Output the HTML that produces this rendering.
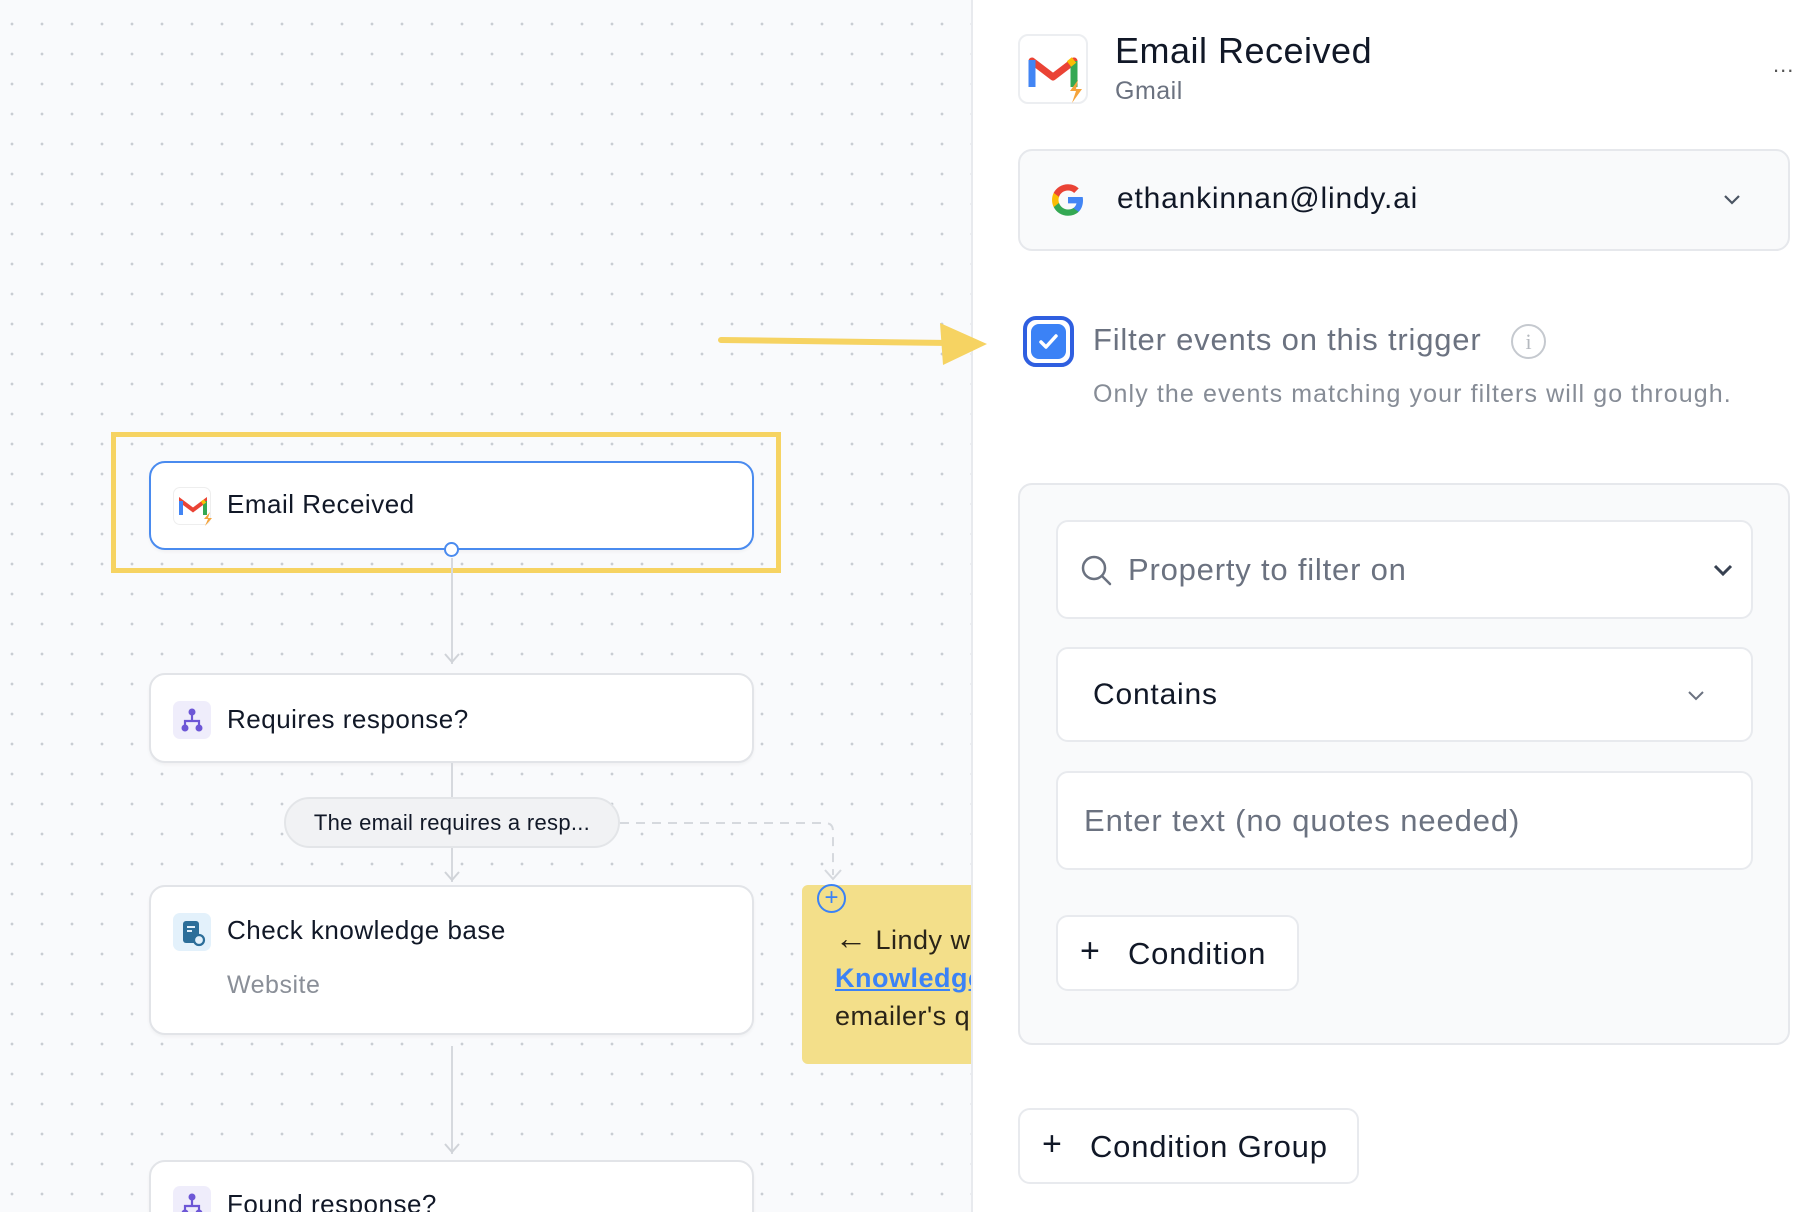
<!DOCTYPE html>
<html style="overflow:hidden;width:1802px;height:1212px"><head><meta charset="utf-8"><style>
*{box-sizing:border-box;margin:0;padding:0}
body{width:1802px;height:1212px;overflow:hidden;position:relative;font-family:"Liberation Sans",sans-serif;background:#fff;letter-spacing:0.5px}
.canvas{position:absolute;left:0;top:0;width:973px;height:1212px;background-color:#f9fafc;background-image:radial-gradient(circle,#c9cdd3 1.2px,transparent 1.6px);background-size:30px 30px;background-position:-3px 9px;border-right:2px solid #e8eaee;overflow:hidden}
.abs{position:absolute}
.node{position:absolute;left:149px;width:605px;background:#fff;border:2px solid #e2e4e8;border-radius:16px;box-shadow:0 2px 3px rgba(0,0,0,.04)}
.ntext{position:absolute;left:76px;font-size:26px;color:#111827}
.ico{position:absolute;left:22px;width:38px;height:38px;border-radius:7px}
.vl{position:absolute;left:451px;width:2px;background:#d6d9de}
.box{position:absolute;border:2px solid #e6e8ec;border-radius:14px}
.field{position:absolute;left:1056px;width:697px;background:#fff;border:2px solid #e8eaee;border-radius:12px}
</style></head><body>
<div class="canvas">

<div class="abs" style="left:111px;top:432px;width:670px;height:141px;border:5px solid #f6d362"></div>
<div class="node" style="top:461px;height:89px;border-color:#4a8bef">
  <div class="ico" style="top:24px;background:#fff;border:1px solid #eee">
    <svg width="38" height="38" viewBox="0 0 38 38"><path d="M7 27V13l12 9 12-9v14" fill="none" stroke="#ea4335" stroke-width="4"/><path d="M7 13v14" stroke="#4285f4" stroke-width="4"/><path d="M31 13v14" stroke="#34a853" stroke-width="4"/><path d="M31 13l-3 2" stroke="#fbbc04" stroke-width="4"/><path d="M36 24l-6 7h4l-3 7 7-8h-4z" fill="#f5a33a"/></svg>
  </div>
  <div class="ntext" style="top:26px">Email Received</div>
</div>
<div class="abs" style="left:444px;top:542px;width:15px;height:15px;border:2px solid #4a8bef;border-radius:50%;background:#fff"></div>
<div class="vl" style="top:558px;height:106px"></div>
<svg class="abs" style="left:443px;top:652px" width="18" height="14"><path d="M2 2l7 8 7-8" fill="none" stroke="#d0d3d8" stroke-width="2"/></svg>

<div class="node" style="top:673px;height:90px">
  <div class="ico" style="top:26px;background:#efedfb">
    <svg width="38" height="38" viewBox="0 0 38 38" fill="#6d57d6"><circle cx="19" cy="11" r="3.5"/><circle cx="12" cy="27" r="3.5"/><circle cx="26" cy="27" r="3.5"/><path d="M19 13v6M12 24v-4h14v4" fill="none" stroke="#6d57d6" stroke-width="2.2"/></svg>
  </div>
  <div class="ntext" style="top:29px">Requires response?</div>
</div>
<div class="vl" style="top:763px;height:34px"></div>
<div class="abs" style="left:284px;top:797px;width:336px;height:51px;background:#f1f2f4;border:2px solid #e3e5e8;border-radius:26px;font-size:22px;color:#111827;text-align:center;line-height:47px;letter-spacing:0.3px">The email requires a resp...</div>
<div class="vl" style="top:848px;height:34px"></div>
<svg class="abs" style="left:443px;top:870px" width="18" height="14"><path d="M2 2l7 8 7-8" fill="none" stroke="#d0d3d8" stroke-width="2"/></svg>
<svg class="abs" style="left:620px;top:815px" width="225" height="70"><path d="M0 8h205q8 0 8 8v44" fill="none" stroke="#d6d9de" stroke-width="2" stroke-dasharray="9 7"/><path d="M205 55l8 9 8-9" fill="none" stroke="#d6d9de" stroke-width="2"/></svg>

<div class="node" style="top:885px;height:150px">
  <div class="ico" style="top:26px;background:#e3f1fb">
    <svg width="38" height="38" viewBox="0 0 38 38"><rect x="10" y="8" width="16" height="22" rx="3" fill="#2c6e99"/><path d="M14 14h8M14 18h5" stroke="#e3f1fb" stroke-width="2"/><circle cx="26" cy="27" r="5" fill="#e3f1fb" stroke="#2c6e99" stroke-width="2.2"/></svg>
  </div>
  <div class="ntext" style="top:28px">Check knowledge base</div>
  <div class="ntext" style="top:84px;color:#8a8f98;font-size:25px">Website</div>
</div>
<div class="vl" style="top:1046px;height:108px"></div>
<svg class="abs" style="left:443px;top:1142px" width="18" height="14"><path d="M2 2l7 8 7-8" fill="none" stroke="#d0d3d8" stroke-width="2"/></svg>
<div class="node" style="top:1160px;height:80px">
  <div class="ico" style="top:24px;background:#efedfb">
    <svg width="38" height="38" viewBox="0 0 38 38" fill="#6d57d6"><circle cx="19" cy="11" r="3.5"/><circle cx="12" cy="27" r="3.5"/><circle cx="26" cy="27" r="3.5"/><path d="M19 13v6M12 24v-4h14v4" fill="none" stroke="#6d57d6" stroke-width="2.2"/></svg>
  </div>
  <div class="ntext" style="top:27px">Found response?</div>
</div>

<div class="abs" style="left:802px;top:885px;width:171px;height:179px;background:#f3df8a;border-radius:6px 0 0 6px;overflow:hidden">
  <div style="position:absolute;left:33px;top:34px;font-size:27px;line-height:38px;color:#2a2418;white-space:nowrap"><span style="font-size:32px">←</span> Lindy w<br><span style="color:#3b82f6;font-weight:bold;text-decoration:underline">Knowledge</span><br>emailer's q</div>
</div>
<div class="abs" style="left:817px;top:884px;width:29px;height:29px;border:2.5px solid #3b82f6;border-radius:50%;color:#3b82f6;font-size:24px;line-height:23px;text-align:center;letter-spacing:0">+</div>
</div>

<svg class="abs" style="left:715px;top:318px" width="275" height="50"><path d="M6 22L235 25" stroke="#f6d362" stroke-width="6" stroke-linecap="round"/><path d="M225 5L272 26L228 47Z" fill="#f6d362"/></svg>

<div class="abs" style="left:1018px;top:34px;width:70px;height:70px;border:2px solid #eceef1;border-radius:10px;background:#fff">
  <svg width="70" height="70" viewBox="0 0 70 70"><path d="M12 50V25l21 16 21-16v25" fill="none" stroke="#ea4335" stroke-width="7" stroke-linejoin="round"/><path d="M12 24v27" stroke="#4285f4" stroke-width="7"/><path d="M54 25v26" stroke="#34a853" stroke-width="7"/><path d="M54 24l-5 4" stroke="#fbbc04" stroke-width="7"/><path d="M58 44l-8 11h6l-4 12 10-14h-6z" fill="#f5a33a"/></svg>
</div>
<div class="abs" style="left:1115px;top:30px;font-size:36px;color:#111827">Email Received</div>
<div class="abs" style="left:1115px;top:77px;font-size:25px;color:#6b7280">Gmail</div>
<div class="abs" style="left:1773px;top:52px;font-size:22px;color:#555;letter-spacing:1px">...</div>

<div class="box" style="left:1018px;top:149px;width:772px;height:102px;background:#f9fafb"></div>
<svg class="abs" style="left:1050px;top:182px" width="36" height="36" viewBox="0 0 48 48"><path d="M44 24.5c0-1.5-.1-3-.4-4.5H24v8.5h11.3c-.5 2.6-2 4.8-4.3 6.3v5.2h6.9c4-3.7 6.1-9.1 6.1-15.5z" fill="#4285f4"/><path d="M24 45c5.8 0 10.6-1.9 14.1-5.1l-6.9-5.2c-1.9 1.3-4.3 2-7.2 2-5.6 0-10.3-3.8-12-8.8H4.9v5.4C8.4 40.3 15.7 45 24 45z" fill="#34a853"/><path d="M12 27.9c-.4-1.3-.7-2.6-.7-4s.3-2.7.7-4v-5.4H4.9C3.5 17.3 2.7 20.6 2.7 24s.8 6.7 2.2 9.5z" fill="#fbbc04"/><path d="M24 11.4c3.2 0 6 1.1 8.2 3.2l6.1-6.1C34.6 5 29.8 3 24 3 15.7 3 8.4 7.7 4.9 14.5l7.1 5.4c1.7-5 6.4-8.5 12-8.5z" fill="#ea4335"/></svg>
<div class="abs" style="left:1117px;top:182px;font-size:30px;color:#111827;letter-spacing:0.8px">ethankinnan@lindy.ai</div>
<svg class="abs" style="left:1722px;top:193px" width="20" height="14"><path d="M3 3l7 7 7-7" fill="none" stroke="#4b5563" stroke-width="2.2"/></svg>

<div class="abs" style="left:1023px;top:316px;width:51px;height:51px;border:4px solid #2f5fe0;border-radius:13px;background:#fff;padding:4px">
  <div style="width:35px;height:35px;background:#3b82f6;border-radius:8px">
    <svg width="35" height="35"><path d="M10 18l5 5 10-11" fill="none" stroke="#fff" stroke-width="3.5" stroke-linecap="round" stroke-linejoin="round"/></svg>
  </div>
</div>
<div class="abs" style="left:1093px;top:322px;font-size:31px;color:#6b7280;letter-spacing:0.8px">Filter events on this trigger</div>
<div class="abs" style="left:1511px;top:324px;width:35px;height:35px;border:2px solid #c5c9cf;border-radius:50%;color:#b5b9bf;font-family:'Liberation Serif',serif;font-size:22px;text-align:center;line-height:31px;letter-spacing:0">i</div>
<div class="abs" style="left:1093px;top:380px;font-size:25px;color:#868c96;letter-spacing:1.1px">Only the events matching your filters will go through.</div>

<div class="box" style="left:1018px;top:483px;width:772px;height:562px;background:#f9fafb"></div>
<div class="field" style="top:520px;height:99px">
  <svg class="abs" style="left:22px;top:32px" width="34" height="34"><circle cx="14" cy="14" r="11" fill="none" stroke="#6b7280" stroke-width="2.5"/><path d="M22 22l8 8" stroke="#6b7280" stroke-width="2.5" stroke-linecap="round"/></svg>
  <div class="abs" style="left:70px;top:30px;font-size:31px;color:#6b7280;letter-spacing:0.8px">Property to filter on</div>
  <svg class="abs" style="left:654px;top:41px" width="22" height="16"><path d="M3 3l8 8 8-8" fill="none" stroke="#374151" stroke-width="3"/></svg>
</div>
<div class="field" style="top:647px;height:95px">
  <div class="abs" style="left:35px;top:29px;font-size:30px;color:#111827;letter-spacing:0.8px">Contains</div>
  <svg class="abs" style="left:628px;top:40px" width="20" height="14"><path d="M3 3l7 7 7-7" fill="none" stroke="#6b7280" stroke-width="2"/></svg>
</div>
<div class="field" style="top:771px;height:99px">
  <div class="abs" style="left:26px;top:30px;font-size:31px;color:#6b7280;letter-spacing:0.9px">Enter text (no quotes needed)</div>
</div>
<div class="field" style="top:915px;width:243px;height:76px">
  <div class="abs" style="left:22px;top:15px;font-size:34px;color:#111827">+</div>
  <div class="abs" style="left:70px;top:19px;font-size:31px;color:#111827;letter-spacing:0.8px">Condition</div>
</div>
<div class="field" style="left:1018px;top:1108px;width:341px;height:76px">
  <div class="abs" style="left:22px;top:15px;font-size:34px;color:#111827">+</div>
  <div class="abs" style="left:70px;top:19px;font-size:31px;color:#111827;letter-spacing:0.8px">Condition Group</div>
</div>
</body></html>
